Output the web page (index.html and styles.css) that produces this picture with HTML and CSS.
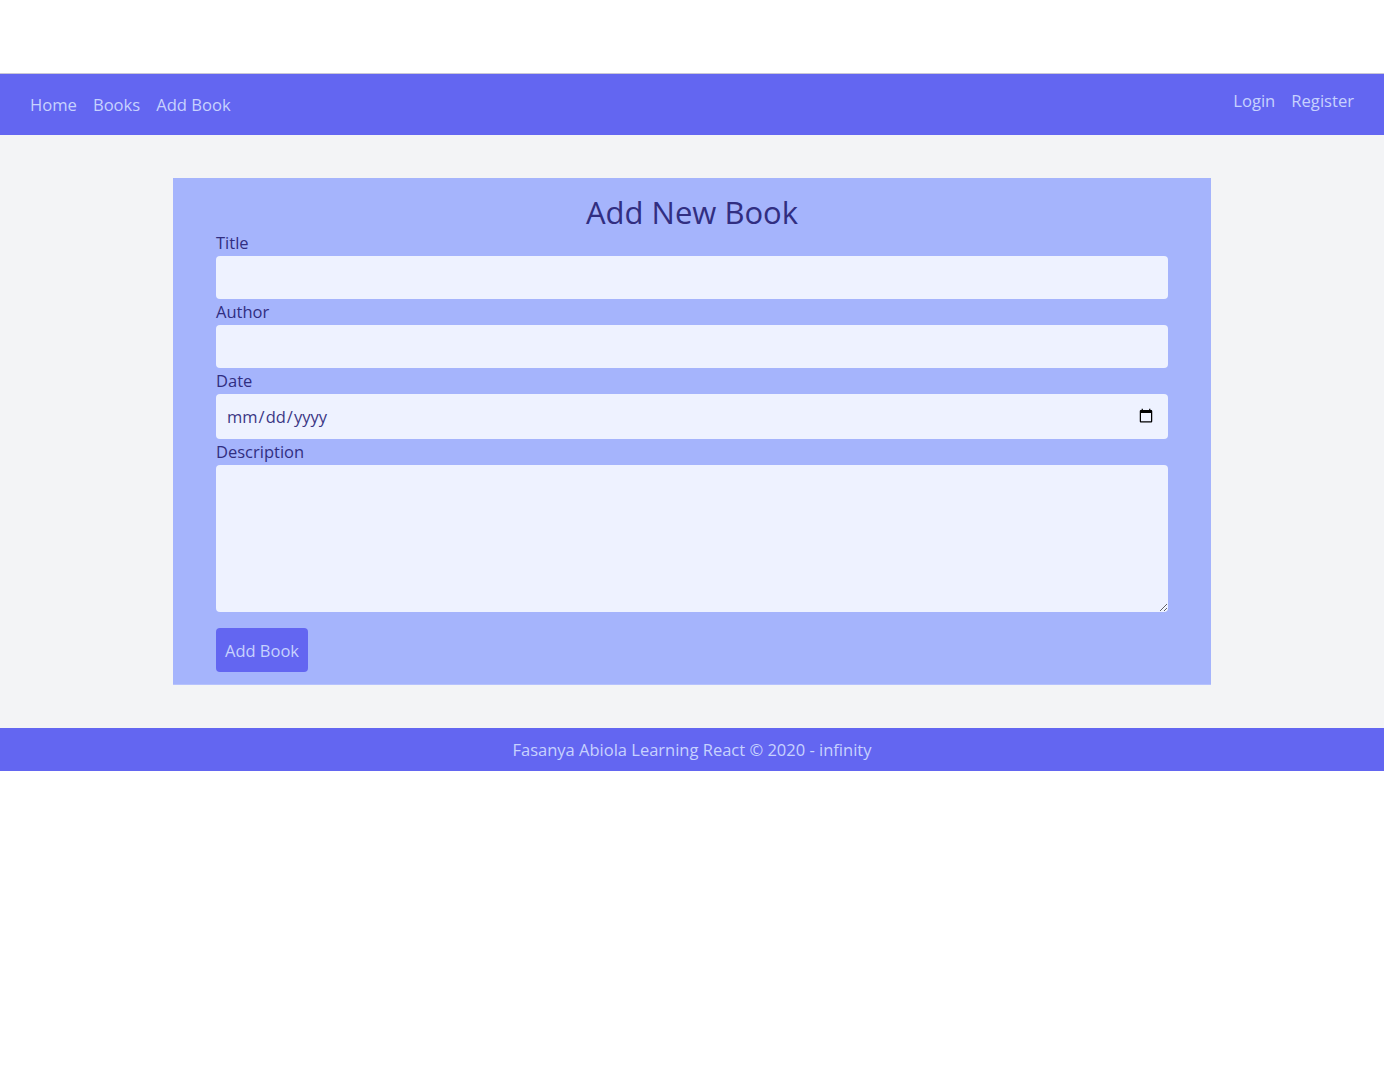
FILE: index.html
```html
<!DOCTYPE html>
<html lang="en">
<head>
<meta charset="utf-8">
<title>Add New Book</title>
<link rel="stylesheet" href="styles.css">
</head>
<body>
<div class="top-space"></div>
<nav class="navbar">
  <div class="nav-left">
    <a href="#" class="nav-link">Home</a>
    <a href="#" class="nav-link">Books</a>
    <a href="#" class="nav-link">Add Book</a>
  </div>
  <div class="nav-right">
    <a href="#" class="nav-link">Login</a>
    <a href="#" class="nav-link">Register</a>
  </div>
</nav>
<main class="main">
  <form class="card">
    <h1 class="card-title">Add New Book</h1>
    <label class="field-label" for="title">Title</label>
    <input class="field-input" id="title" type="text">
    <label class="field-label" for="author">Author</label>
    <input class="field-input" id="author" type="text">
    <label class="field-label" for="date">Date</label>
    <input class="field-input field-date" id="date" type="date">
    <label class="field-label" for="desc">Description</label>
    <textarea class="field-input field-area" id="desc"></textarea>
    <button type="button" class="btn">Add Book</button>
  </form>
</main>
<footer class="footer">Fasanya Abiola Learning React © 2020 - infinity</footer>
</body>
</html>
```
FILE: styles.css
```css
* { box-sizing: border-box; }
body {
  margin: 0;
  background: #ffffff;
  font-family: "Open Sans", "Noto Sans", sans-serif;
  color: #312e81;
}
.top-space {
  height: 74px;
  border-bottom: 1px solid #c9c6d6;
}
.navbar {
  height: 61px;
  background: #6366f1;
  display: flex;
  justify-content: space-between;
  align-items: center;
  padding: 0 30px;
}
.nav-left, .nav-right {
  display: flex;
  gap: 16px;
}
.nav-right { padding-bottom: 7px; }
.nav-link {
  color: #c7d2fe;
  text-decoration: none;
  font-size: 16.6px;
  line-height: 24px;
}
.main {
  background: #f3f4f6;
  padding: 43px 0;
}
.card {
  width: 1038px;
  margin: 0 auto;
  background: #a5b4fc;
  padding: 16px 43px 12px;
  display: flex;
  flex-direction: column;
  border-bottom: 1px solid #b6c2fd;
}
.card-title {
  margin: 0;
  text-align: center;
  font-weight: 400;
  font-size: 31px;
  line-height: 36px;
  color: #312e81;
}
.field-label {
  font-size: 16.5px;
  line-height: 24px;
  color: #312e81;
  height: 26px;
  padding-top: 1px;
}
.field-input {
  width: 100%;
  height: 43px;
  border: none;
  border-radius: 4px;
  background: #eef2ff;
  font-family: inherit;
  font-size: 16.5px;
  color: #3b3785;
  padding: 0 10px;
  outline: none;
}
.field-date {
  height: 45px;
  padding-right: 12px;
}
.field-area {
  height: 147px;
  padding: 8px 10px;
  resize: vertical;
}
.btn {
  align-self: flex-start;
  margin-top: 16px;
  height: 44px;
  width: 92px;
  padding: 0;
  border: none;
  border-radius: 4px;
  background: #6366f1;
  color: #c7d2fe;
  font-family: inherit;
  font-size: 16.5px;
}
.footer {
  height: 43px;
  background: #6366f1;
  color: #c7d2fe;
  font-size: 16.5px;
  display: flex;
  align-items: center;
  justify-content: center;
}
```
